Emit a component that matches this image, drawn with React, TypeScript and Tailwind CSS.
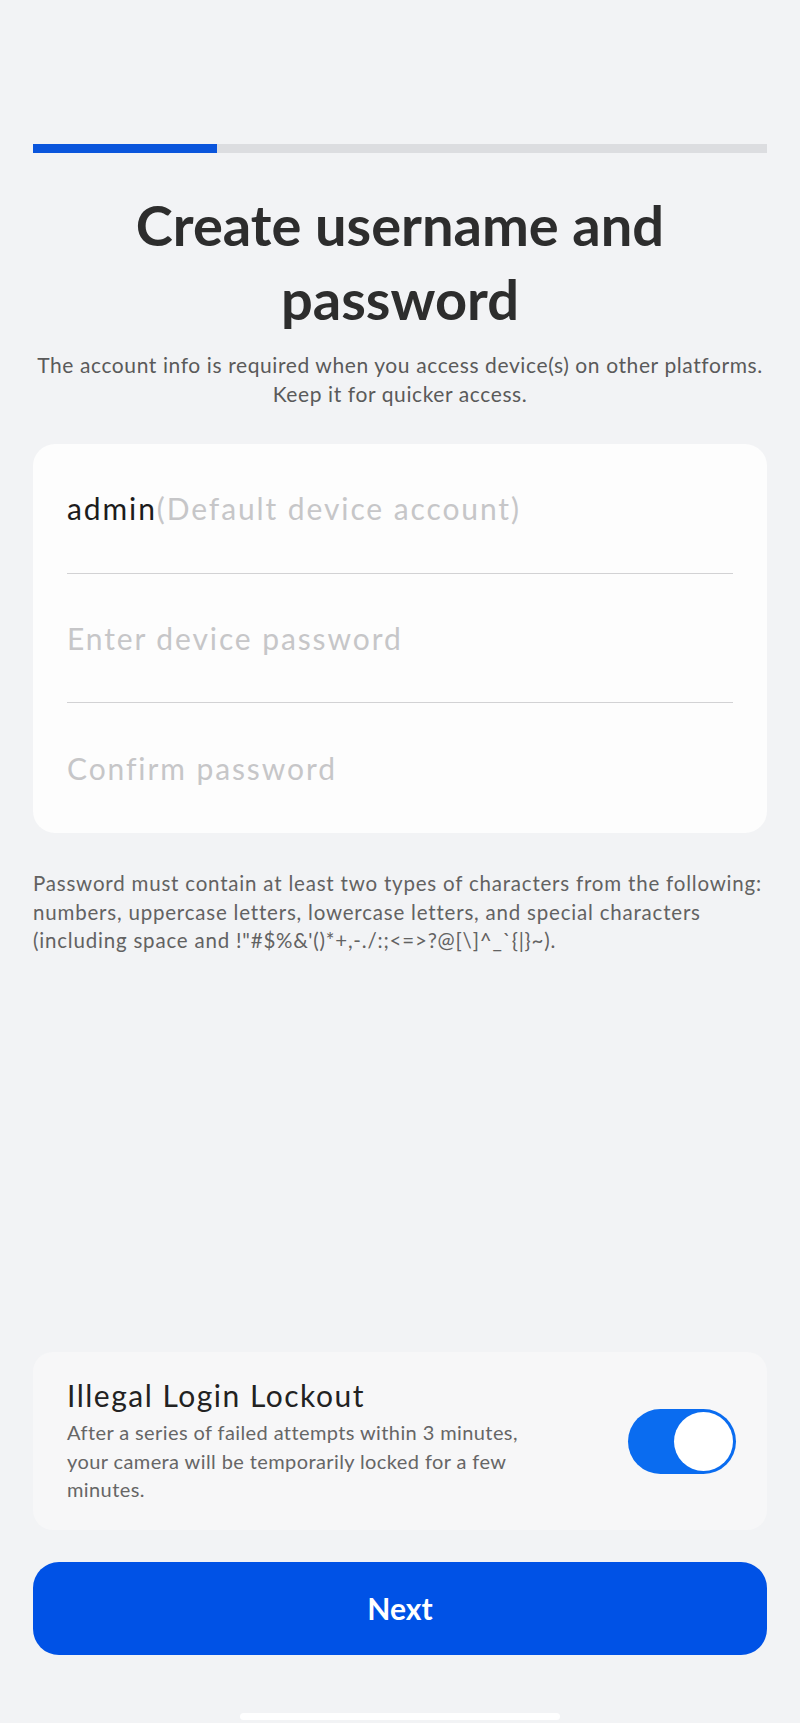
import { useState } from "react";

const font = { fontFamily: "Lato, 'Noto Sans', sans-serif" };

const Toggle = ({ on, onChange }: { on: boolean; onChange: (v: boolean) => void }) => (
  <button
    onClick={() => onChange(!on)}
    aria-label="Illegal login lockout"
    className={`relative w-[108px] h-[65px] rounded-full shrink-0 ${on ? "bg-[#0a6cf0]" : "bg-[#d6d7da]"}`}
  >
    <span
      className={`absolute top-[3px] w-[59px] h-[59px] rounded-full bg-white ${on ? "right-[3px]" : "left-[3px]"}`}
    />
  </button>
);

export default function App() {
  const [lockout, setLockout] = useState(true);

  return (
    <div
      className="w-full h-[1723px] bg-[#f2f3f5] px-[33px] flex flex-col"
      style={font}
    >
      {/* progress */}
      <div className="mt-[144px] h-[9px] bg-[#dcdde0]">
        <div className="h-full w-[184px] bg-[#0a55dc]" />
      </div>

      <h1 className="mt-[35px] text-center text-[56px] leading-[74px] font-bold text-[#2d2d2d]">
        Create username and
        <br />
        password
      </h1>

      <p className="mt-[14px] text-center text-[21px] leading-[29px] text-[#5a5a5a] whitespace-nowrap tracking-[0.6px]">
        The account info is required when you access device(s) on other platforms.
        <br />
        Keep it for quicker access.
      </p>

      {/* account fields */}
      <div className="mt-[36px] bg-[#fdfdfd] rounded-[22px] px-[34px]">
        <div className="h-[130px] flex items-center border-b border-[#d2d2d4] text-[30px] tracking-[1.9px]">
          <span className="text-[#1c1c1c]">admin</span>
          <span className="text-[#c6c6c8]">(Default device account)</span>
        </div>
        <div className="h-[129px] flex items-center border-b border-[#d2d2d4]">
          <input
            type="password"
            placeholder="Enter device password"
            className="w-full bg-transparent outline-none text-[30px] tracking-[1.9px] text-[#1c1c1c] placeholder:text-[#c6c6c8]"
          />
        </div>
        <div className="h-[130px] flex items-center">
          <input
            type="password"
            placeholder="Confirm password"
            className="w-full bg-transparent outline-none text-[30px] tracking-[1.9px] text-[#1c1c1c] placeholder:text-[#c6c6c8]"
          />
        </div>
      </div>

      <p className="mt-[36px] text-[20.5px] leading-[28.5px] text-[#626262] whitespace-nowrap tracking-[0.8px]">
        Password must contain at least two types of characters from the following:
        <br />
        numbers, uppercase letters, lowercase letters, and special characters
        <br />
        {"(including space and !\"#$%&'()*+,-./:;<=>?@[\\]^_`{|}~)."}
      </p>

      <div className="flex-1" />

      {/* lockout */}
      <div className="h-[178px] bg-[#f7f7f8] rounded-[20px] pl-[34px] pr-[31px] flex items-center justify-between">
        <div>
          <div className="text-[30px] leading-[34px] tracking-[1.5px] text-[#222]">Illegal Login Lockout</div>
          <p className="mt-[6px] text-[20px] leading-[28.5px] tracking-[0.4px] text-[#666] whitespace-nowrap">
            After a series of failed attempts within 3 minutes,
            <br />
            your camera will be temporarily locked for a few
            <br />
            minutes.
          </p>
        </div>
        <Toggle on={lockout} onChange={setLockout} />
      </div>

      <button className="mt-[32px] h-[93px] rounded-[26px] bg-[#0052e6] text-white text-[30px] font-bold">
        Next
      </button>

      <div className="mt-[58px] mb-[3px] h-[7px] w-[320px] mx-auto rounded-full bg-white" />
    </div>
  );
}
